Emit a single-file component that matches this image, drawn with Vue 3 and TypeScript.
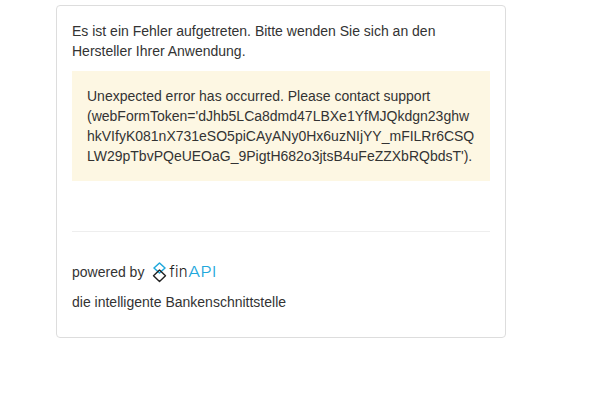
<script setup lang="ts">
const token = "Unexpected error has occurred. Please contact support (webFormToken='dJhb5LCa8dmd47LBXe1YfMJQkdgn23ghwhkVIfyK081nX731eSO5piCAyANy0Hx6uzNIjYY_mFILRr6CSQLW29pTbvPQeUEOaG_9PigtH682o3jtsB4uFeZZXbRQbdsT').";
</script>

<template>
  <main class="card">
    <p class="intro">Es ist ein Fehler aufgetreten. Bitte wenden Sie sich an den Hersteller Ihrer Anwendung.</p>
    <div class="alert">{{ token }}</div>
    <hr class="rule" />
    <div class="powered">
      <span>powered by</span>
      <span class="logo">
        <svg class="mark" width="16" height="21" viewBox="0 0 16 21" fill="none" stroke-linejoin="round">
          <path d="M7.5 1 L13 6 L7.5 11 L2 6 Z" stroke="#1fa8dc" stroke-width="1.5" />
          <path d="M7.5 8 L13.5 13.8 L7.5 19.6 L1.5 13.8 Z" stroke="#222" stroke-width="1.4" />
        </svg>
        <span class="fin">fin</span><span class="api">API</span>
      </span>
    </div>
    <p class="tag">die intelligente Bankenschnittstelle</p>
  </main>
</template>

<style scoped>
.card {
  box-sizing: border-box;
  width: 450px;
  height: 333px;
  margin: 5px 0 0 56px;
  padding: 15px;
  border: 1px solid #ddd;
  border-radius: 4px;
  background: #fff;
  color: #333;
  font-family: "Liberation Sans", Arial, sans-serif;
  font-size: 14px;
  line-height: 20px;
}
.intro {
  margin: 0 0 10px;
}
.alert {
  padding: 15px;
  margin-bottom: 20px;
  background: #fdf7e3;
  overflow-wrap: break-word;
}
.rule {
  margin: 50px 0 0;
  border: 0;
  border-top: 1px solid #eee;
}
.powered {
  display: flex;
  align-items: center;
  gap: 8px;
  margin-top: 29px;
  height: 22px;
}
.logo {
  display: flex;
  align-items: center;
}
.mark {
  margin-right: 1px;
}
.fin {
  font-family: "Inter", sans-serif;
  font-weight: 300;
  font-size: 15px;
  color: #222;
  letter-spacing: 0.4px;
}
.api {
  font-family: "Inter", sans-serif;
  font-weight: 300;
  font-size: 15px;
  color: #1fa8dc;
  transform: scaleX(1.22);
  transform-origin: left center;
}
.tag {
  margin: 9px 0 0;
}
</style>
